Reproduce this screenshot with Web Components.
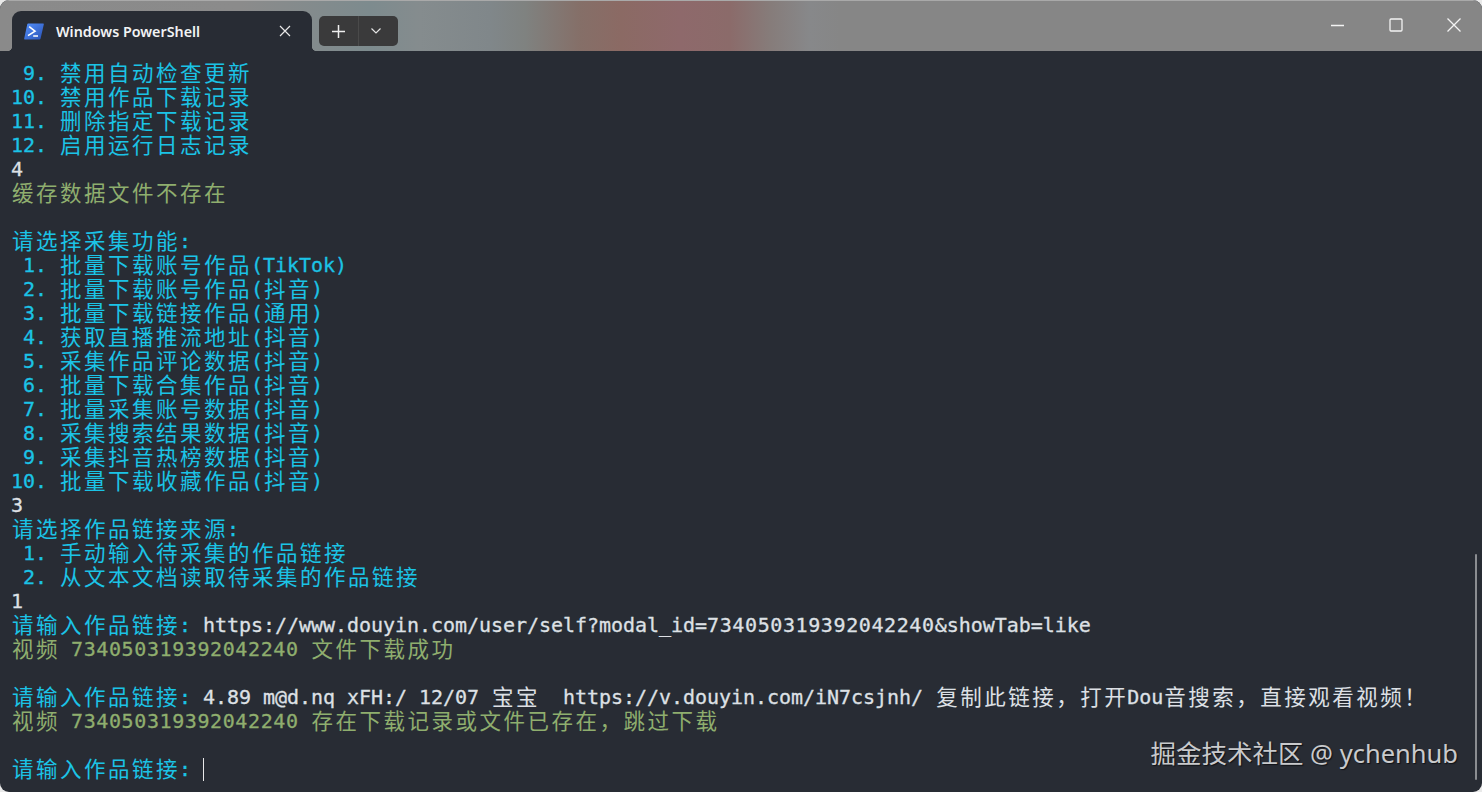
<!DOCTYPE html>
<html>
<head>
<meta charset="utf-8">
<title>Windows PowerShell</title>
<style>
  html, body { margin: 0; height: 100%; background: #e9e9e9; overflow: hidden; }
</style>
</head>
<body>
<terminal-window>
  <tab-bar slot="bar"></tab-bar>
  <term-line c="c"> 9. 禁用自动检查更新</term-line>
  <term-line c="c">10. 禁用作品下载记录</term-line>
  <term-line c="c">11. 删除指定下载记录</term-line>
  <term-line c="c">12. 启用运行日志记录</term-line>
  <term-line c="w">4</term-line>
  <term-line c="g">缓存数据文件不存在</term-line>
  <term-line></term-line>
  <term-line c="c">请选择采集功能:</term-line>
  <term-line c="c"> 1. 批量下载账号作品(TikTok)</term-line>
  <term-line c="c"> 2. 批量下载账号作品(抖音)</term-line>
  <term-line c="c"> 3. 批量下载链接作品(通用)</term-line>
  <term-line c="c"> 4. 获取直播推流地址(抖音)</term-line>
  <term-line c="c"> 5. 采集作品评论数据(抖音)</term-line>
  <term-line c="c"> 6. 批量下载合集作品(抖音)</term-line>
  <term-line c="c"> 7. 批量采集账号数据(抖音)</term-line>
  <term-line c="c"> 8. 采集搜索结果数据(抖音)</term-line>
  <term-line c="c"> 9. 采集抖音热榜数据(抖音)</term-line>
  <term-line c="c">10. 批量下载收藏作品(抖音)</term-line>
  <term-line c="w">3</term-line>
  <term-line c="c">请选择作品链接来源:</term-line>
  <term-line c="c"> 1. 手动输入待采集的作品链接</term-line>
  <term-line c="c"> 2. 从文本文档读取待采集的作品链接</term-line>
  <term-line c="w">1</term-line>
  <term-line c="c" prompt="请输入作品链接: ">https://www.douyin.com/user/self?modal_id=734050319392042240&amp;showTab=like</term-line>
  <term-line c="g">视频 734050319392042240 文件下载成功</term-line>
  <term-line></term-line>
  <term-line c="c" prompt="请输入作品链接: ">4.89 m@d.nq xFH:/ 12/07 宝宝  https://v.douyin.com/iN7csjnh/ 复制此链接&#xff0c;打开Dou音搜索&#xff0c;直接观看视频&#xff01;</term-line>
  <term-line c="g">视频 734050319392042240 存在下载记录或文件已存在&#xff0c;跳过下载</term-line>
  <term-line></term-line>
  <term-line c="c" prompt="请输入作品链接: " cursor></term-line>
</terminal-window>

<script>
class TerminalWindow extends HTMLElement {
  constructor() {
    super()
    this.attachShadow({ mode: "open" })
    this.shadowRoot.innerHTML = `
      <style>
        :host { display: flex; flex-direction: column; width: 1482px; height: 792px; border-radius: 9px; overflow: hidden; position: relative; background: #282c34; }
        .body { flex: 1; padding: 10px 0 0 11px; overflow: hidden; }
        .scroll { position: absolute; right: 5px; top: 554px; width: 2px; height: 226px; background: #8b8d91; border-radius: 1px; }
        .mark { position: absolute; right: 24px; top: 733px; font: 25.5px "Noto Sans", "Noto Sans CJK SC", sans-serif; color: #c9cacc; text-shadow: 1px 1px 1px #101216; white-space: nowrap; }
      </style>
      <slot name="bar"></slot>
      <div class="body"><slot></slot></div>
      <div class="scroll"></div>
      <div class="mark">掘金技术社区 @ ychenhub</div>
    `
  }
}

class TabBar extends HTMLElement {
  constructor() {
    super()
    this.attachShadow({ mode: "open" })
    this.shadowRoot.innerHTML = `
      <style>
        :host {
          display: flex; align-items: flex-end; height: 51px; box-sizing: border-box; padding-left: 12px; flex: none;
          border-top: 1px solid #a9a9a9; position: relative;
          background: linear-gradient(90deg, #8a8a8a 0, #8b8b8b 240px, #7d8b8e 370px, #858c8e 420px, #80878a 490px, #7f8280 525px, #856f68 580px, #8b6a64 620px, #8e696b 680px, #8b6b6a 730px, #867c7a 770px, #87888a 810px, #868686 840px, #868686 100%);
        }
        .tab { width: 300px; height: 40px; box-sizing: border-box; background: #282c34; border-radius: 9px 9px 0 0; display: flex; align-items: center; padding: 0 21px 0 12px; color: #f2f3f4; font: 600 14.3px "Noto Sans", "Open Sans", sans-serif; position: relative; }
        .tab::before, .tab::after { content: ""; position: absolute; bottom: 0; width: 5px; height: 5px; }
        .tab::before { left: -5px; background: radial-gradient(circle at 0 0, transparent 5px, #282c34 5.500px); }
        .tab::after { right: -5px; background: radial-gradient(circle at 100% 0, transparent 5px, #282c34 5.500px); }
        .tab svg.ps { margin-right: 12px; flex: none; }
        .tab span { flex: 1; }
        .btns { margin: 0 0 5px 7px; width: 79px; height: 30px; border-radius: 5px; background: #3a3a3b; display: flex; }
        .btns div { display: flex; align-items: center; justify-content: center; }
        .btns .add { width: 39px; border-right: 1px solid #4a4a4a; }
        .btns .more { flex: 1; padding-right: 6px; }
        .ctl { position: absolute; top: 17px; }
      </style>
      <div class="tab">
        <svg class="ps" width="20" height="17" viewBox="0 0 20 17">
          <defs><linearGradient id="g" x1="0" y1="0" x2="1" y2="1"><stop offset="0" stop-color="#5391fe"/><stop offset="1" stop-color="#2a52b4"/></linearGradient></defs>
          <path d="M4.2 0.5H19c.6 0 .9.4.8 1L16.6 15.6c-.1.5-.6.9-1.1.9H1c-.6 0-.9-.4-.8-1L3.2 1.4c.1-.5.5-.9 1-.9z" fill="url(#g)"/>
          <path d="M5.2 3.6L11 8.2 4 12.6" fill="none" stroke="#fff" stroke-width="1.6"/>
          <path d="M9.2 13H14" fill="none" stroke="#fff" stroke-width="1.5"/>
        </svg>
        <span>Windows PowerShell</span>
        <svg width="12" height="12" viewBox="0 0 12 12"><path d="M1 1l10 10M11 1L1 11" stroke="#e8e8e8" stroke-width="1.2"/></svg>
      </div>
      <div class="btns">
        <div class="add"><svg width="13" height="13" viewBox="0 0 13 13"><path d="M6.5 0v13M0 6.5h13" stroke="#efefef" stroke-width="1.5"/></svg></div>
        <div class="more"><svg width="10" height="6" viewBox="0 0 10 6"><path d="M.5.5L5 5 9.500.5" fill="none" stroke="#e4e4e4" stroke-width="1.2"/></svg></div>
      </div>
      <svg class="ctl" style="left:1331px" width="13" height="13" viewBox="0 0 13 13"><path d="M0 7.500h13" stroke="#f3f3f3" stroke-width="1.300"/></svg>
      <svg class="ctl" style="left:1389px" width="14" height="14" viewBox="0 0 14 14"><rect x="1" y="1" width="12" height="12" rx="1" fill="none" stroke="#f3f3f3" stroke-width="1.300"/></svg>
      <svg class="ctl" style="left:1447px" width="14" height="14" viewBox="0 0 14 14"><path d="M.5.500l13 13M13.500.500l-13 13" stroke="#f3f3f3" stroke-width="1.300"/></svg>
    `
  }
}

const TOKEN = /([\u3400-\u9fff\uff00-\uffef]+|\d{6,})/
const COLORS = { c: "#1bc3e6", g: "#8fae6e", w: "#dde0e5" }

class TermLine extends HTMLElement {
  constructor() {
    super()
    this.attachShadow({ mode: "open" })
  }
  connectedCallback() {
    const color = COLORS[this.getAttribute("c")] || COLORS.w
    const prompt = this.getAttribute("prompt")
    let html = ""
    if (prompt) html += `<span style="color:${COLORS.c}">${this.cells(prompt)}</span>`
    const textColor = prompt ? COLORS.w : color
    html += `<span style="color:${textColor}">${this.cells(this.textContent)}</span>`
    if (this.hasAttribute("cursor")) html += `<i class="cur"></i>`
    this.shadowRoot.innerHTML = `
      <style>
        :host { display: block; height: 24px; font: 20px/24px "DejaVu Sans Mono", "Noto Sans CJK SC", monospace; }
        .row { white-space: pre; height: 24px; letter-spacing: -0.04px; -webkit-text-stroke: 0.3px currentColor; }
        .w { letter-spacing: 2.500px; font: 21.500px/0 "Noto Sans CJK SC", sans-serif; -webkit-text-stroke: 0; vertical-align: -1px; margin: 0 -1px 0 1px; }
        .n { letter-spacing: 0.600px; }
        .cur { display: inline-block; width: 1px; height: 23px; background: #e8e8e8; vertical-align: -5px; }
      </style>
      <div class="row">${html}</div>`
  }
  cells(text) {
    return text.split(TOKEN).map((part, i) => {
      const safe = part.replace(/&/g, "&amp;").replace(/</g, "&lt;")
      if (i % 2 == 0) return safe
      return `<span class="${/^\d/.test(part) ? "n" : "w"}">${safe}</span>`
    }).join("")
  }
}

customElements.define("terminal-window", TerminalWindow)
customElements.define("tab-bar", TabBar)
customElements.define("term-line", TermLine)
</script>
</body>
</html>
